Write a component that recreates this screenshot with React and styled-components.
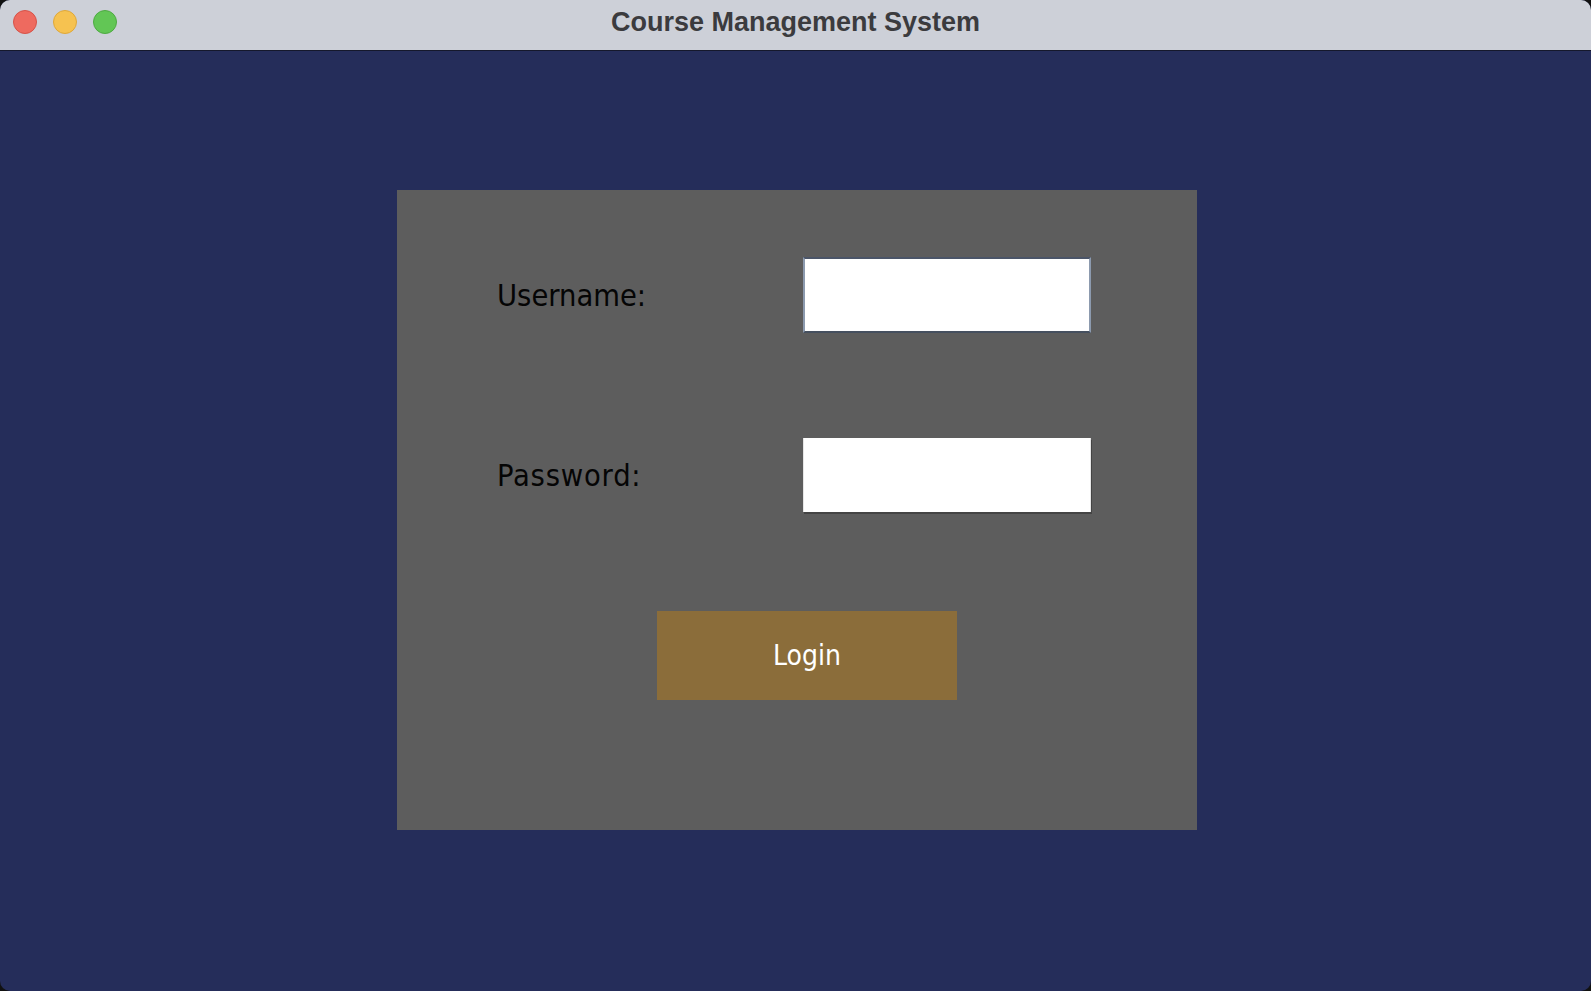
import React from 'react';
import styled, { createGlobalStyle } from 'styled-components';

const GlobalStyle = createGlobalStyle`
  html, body {
    margin: 0;
    padding: 0;
    background: #111;
    overflow: hidden;
  }
`;

const Window = styled.div`
  width: 1591px;
  height: 991px;
  display: flex;
  flex-direction: column;
  border-radius: 10px;
  overflow: hidden;
  background: #252d5a;
`;

const TitleBar = styled.div`
  position: relative;
  height: 50px;
  flex: none;
  display: flex;
  align-items: center;
  justify-content: center;
  background: #cdd0d8;
  border-bottom: 1px solid #15182c;
`;

const Lights = styled.div`
  position: absolute;
  left: 13px;
  top: 10px;
  display: flex;
  gap: 16px;
`;

const Light = styled.span`
  width: 24px;
  height: 24px;
  box-sizing: border-box;
  border-radius: 50%;
  background: ${p => p.color};
  border: 1px solid ${p => p.edge};
`;

const Title = styled.div`
  font-family: "Liberation Sans", Arial, sans-serif;
  font-weight: 700;
  font-size: 27px;
  color: #3b3b3e;
  margin-top: -6px;
`;

const Content = styled.div`
  flex: 1;
  padding: 139px 0 0 397px;
`;

const Panel = styled.form`
  width: 800px;
  height: 640px;
  box-sizing: border-box;
  background: #5d5d5d;
  padding: 67px 0 0 100px;
  display: grid;
  grid-template-columns: 306px 288px;
  grid-template-rows: 76px 74px 89px;
  row-gap: 105px;
  align-items: center;
`;

const Label = styled.label`
  font-family: "DejaVu Sans", Verdana, sans-serif;
  font-stretch: condensed;
  font-size: 30.5px;
  letter-spacing: ${p => p.spread || 0}px;
  color: #050505;
`;

const Field = styled.input`
  width: 288px;
  height: ${p => p.h}px;
  box-sizing: border-box;
  margin: 0;
  padding: 0 8px;
  background: #fff;
  border: none;
  outline: none;
  font-size: 20px;
  ${p => (p.focused
    ? `border-top: 2px solid #4b5568;
       border-bottom: 2px solid #46505f;
       border-left: 2px solid #8c9aae;
       border-right: 2px solid #8c9aae;`
    : `border-left: 1px solid #e6e6e6;
       border-right: 1px solid #e6e6e6;
       box-shadow: 1px 2px 0 #444;`)}
`;

const LoginButton = styled.button`
  grid-column: 1 / 3;
  margin-left: 160px;
  width: 300px;
  height: 89px;
  border: none;
  background: #8b6d3a;
  color: #fff;
  font-family: "DejaVu Sans", Verdana, sans-serif;
  font-stretch: condensed;
  font-size: 28px;
  cursor: pointer;
  margin-top: -13px;
`;

const App = () => (
  <Window>
    <GlobalStyle />
    <TitleBar>
      <Lights>
        <Light color="#ee6a5f" edge="#d55248" />
        <Light color="#f6c250" edge="#dea73a" />
        <Light color="#62c655" edge="#4ea942" />
      </Lights>
      <Title>Course Management System</Title>
    </TitleBar>
    <Content>
      <Panel onSubmit={e => e.preventDefault()}>
        <Label htmlFor="username">Username:</Label>
        <Field id="username" type="text" h={76} focused />
        <Label htmlFor="password" spread={0.8}>Password:</Label>
        <Field id="password" type="password" h={74} />
        <LoginButton type="submit">Login</LoginButton>
      </Panel>
    </Content>
  </Window>
);

export default App;
